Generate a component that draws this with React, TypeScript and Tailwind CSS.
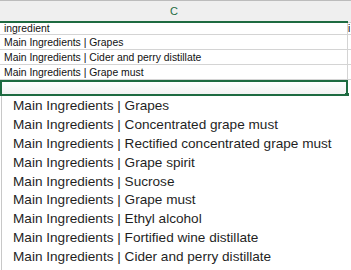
import React from 'react';

const rows = [
  'ingredient',
  'Main Ingredients | Grapes',
  'Main Ingredients | Cider and perry distillate',
  'Main Ingredients | Grape must',
];

const options = [
  'Main Ingredients | Grapes',
  'Main Ingredients | Concentrated grape must',
  'Main Ingredients | Rectified concentrated grape must',
  'Main Ingredients | Grape spirit',
  'Main Ingredients | Sucrose',
  'Main Ingredients | Grape must',
  'Main Ingredients | Ethyl alcohol',
  'Main Ingredients | Fortified wine distillate',
  'Main Ingredients | Cider and perry distillate',
];

export default function App() {
  return (
    <div className="relative w-[351px] h-[270px] overflow-hidden bg-white" style={{ fontFamily: '"Liberation Sans", Arial, sans-serif' }}>
      {/* column header */}
      <div className="flex h-[23px] border-t border-[#bcbcbc] bg-[#efefef]">
        <div className="w-[348px] flex items-center justify-center border-b-2 border-[#1e6b41] text-[11px] text-[#1e6b41]">C</div>
        <div className="flex-1 border-b border-[#d0d0d0]"></div>
      </div>

      {/* rows */}
      {rows.map((r, i) => (
        <div key={i} className={`flex ${i === 0 ? 'h-[12px]' : 'h-[15px]'}`}>
          <div className={`w-[348px] pl-[4px] border-r border-b border-[#d4d4d4] text-[10.4px] text-[#111] flex items-end overflow-hidden whitespace-nowrap ${i === 0 ? 'leading-[11px]' : 'leading-[13px]'}`}>
            {r}
          </div>
          <div className="flex-1 border-b border-[#d4d4d4] text-[10px] overflow-hidden leading-[11px]">{i === 0 ? 'i' : ''}</div>
        </div>
      ))}

      {/* selected cell */}
      <div className="relative flex h-[16px]">
        <div className="w-[348px] border-2 border-[#1e6b41] bg-gradient-to-b from-white to-[#f2f2f2]"></div>
        <div className="flex-1"></div>
        <div className="absolute left-[345px] top-[13px] w-[4px] h-[4px] bg-[#1e6b41]"></div>
      </div>

      {/* dropdown list */}
      <div className="absolute left-[1px] top-[96px] right-0 bottom-0 bg-white border-l border-[#c8c8c8] pl-[11px] pt-[1px]" style={{ fontFamily: '"Helvetica Neue", "Liberation Sans", Arial, sans-serif' }}>
        {options.map((o) => (
          <div key={o} className="h-[18.9px] leading-[18.9px] text-[13.6px] text-[#1f1f1f] whitespace-nowrap">{o}</div>
        ))}
      </div>
    </div>
  );
}
